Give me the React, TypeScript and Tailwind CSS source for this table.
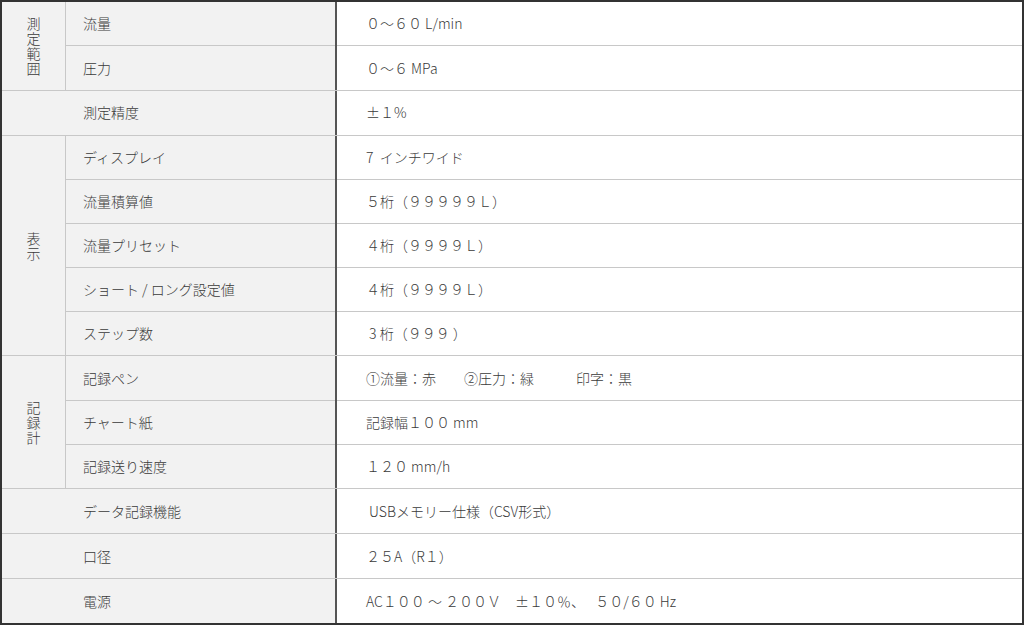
type Row = { label: string; value: string }

type Group = { title?: string; rows: Row[] }

const groups: Group[] = [
  {
    title: "測定範囲",
    rows: [
      { label: "流量", value: "０～６０ L/min" },
      { label: "圧力", value: "０～６ MPa" },
    ],
  },
  { rows: [{ label: "測定精度", value: "±１%" }] },
  {
    title: "表示",
    rows: [
      { label: "ディスプレイ", value: "7  インチワイド" },
      { label: "流量積算値", value: "５桁（９９９９９Ｌ）" },
      { label: "流量プリセット", value: "４桁（９９９９Ｌ）" },
      { label: "ショート / ロング設定値", value: "４桁（９９９９Ｌ）" },
      { label: "ステップ数", value: " 3 桁（９９９ ）" },
    ],
  },
  {
    title: "記録計",
    rows: [
      { label: "記録ペン", value: "①流量：赤　　②圧力：緑　　　印字：黒" },
      { label: "チャート紙", value: "記録幅１００ mm" },
      { label: "記録送り速度", value: "１２０ mm/h" },
    ],
  },
  { rows: [{ label: "データ記録機能", value: " USBメモリー仕様（CSV形式）" }] },
  { rows: [{ label: "口径", value: "２５A（R１）" }] },
  { rows: [{ label: "電源", value: "AC１００ ～ ２００Ｖ　±１０％、　 ５０/６０ Hz" }] },
]

export default function App() {
  return (
    <div
      className="w-[1024px] h-[625px] bg-white text-[14px] font-light text-[#3a3a3a] border-2 border-[#333] flex flex-col"
      style={{ fontFamily: '"Noto Sans CJK JP", "Noto Sans", sans-serif' }}
    >
      {groups.map((group, gi) => (
        <div
          key={gi}
          className={
            "flex " + (gi < groups.length - 1 ? "border-b border-[#c8c8c8]" : "")
          }
          style={{ flex: group.rows.length }}
        >
          {/* label side */}
          <div className="w-[333px] bg-[#f2f2f2] flex shrink-0">
            {group.title ? (
              <>
                <div className="w-[64px] border-r border-[#c8c8c8] flex items-center justify-center">
                  <div className="flex flex-col items-center leading-[15px]">
                    {group.title.split("").map((ch, i) => (
                      <span key={i}>{ch}</span>
                    ))}
                  </div>
                </div>
                <div className="flex-1 flex flex-col">
                  {group.rows.map((row, ri) => (
                    <div
                      key={ri}
                      className={
                        "flex-1 flex items-center pl-[17px] " +
                        (ri < group.rows.length - 1 ? "border-b border-[#c8c8c8]" : "")
                      }
                    >
                      {row.label}
                    </div>
                  ))}
                </div>
              </>
            ) : (
              <div className="flex-1 flex items-center pl-[81px]">{group.rows[0].label}</div>
            )}
          </div>

          {/* value side */}
          <div className="flex-1 flex flex-col border-l-2 border-[#555]">
            {group.rows.map((row, ri) => (
              <div
                key={ri}
                className={
                  "flex-1 flex items-center pl-[29px] whitespace-pre " +
                  (ri < group.rows.length - 1 ? "border-b border-[#c8c8c8]" : "")
                }
              >
                {row.value}
              </div>
            ))}
          </div>
        </div>
      ))}
    </div>
  )
}
